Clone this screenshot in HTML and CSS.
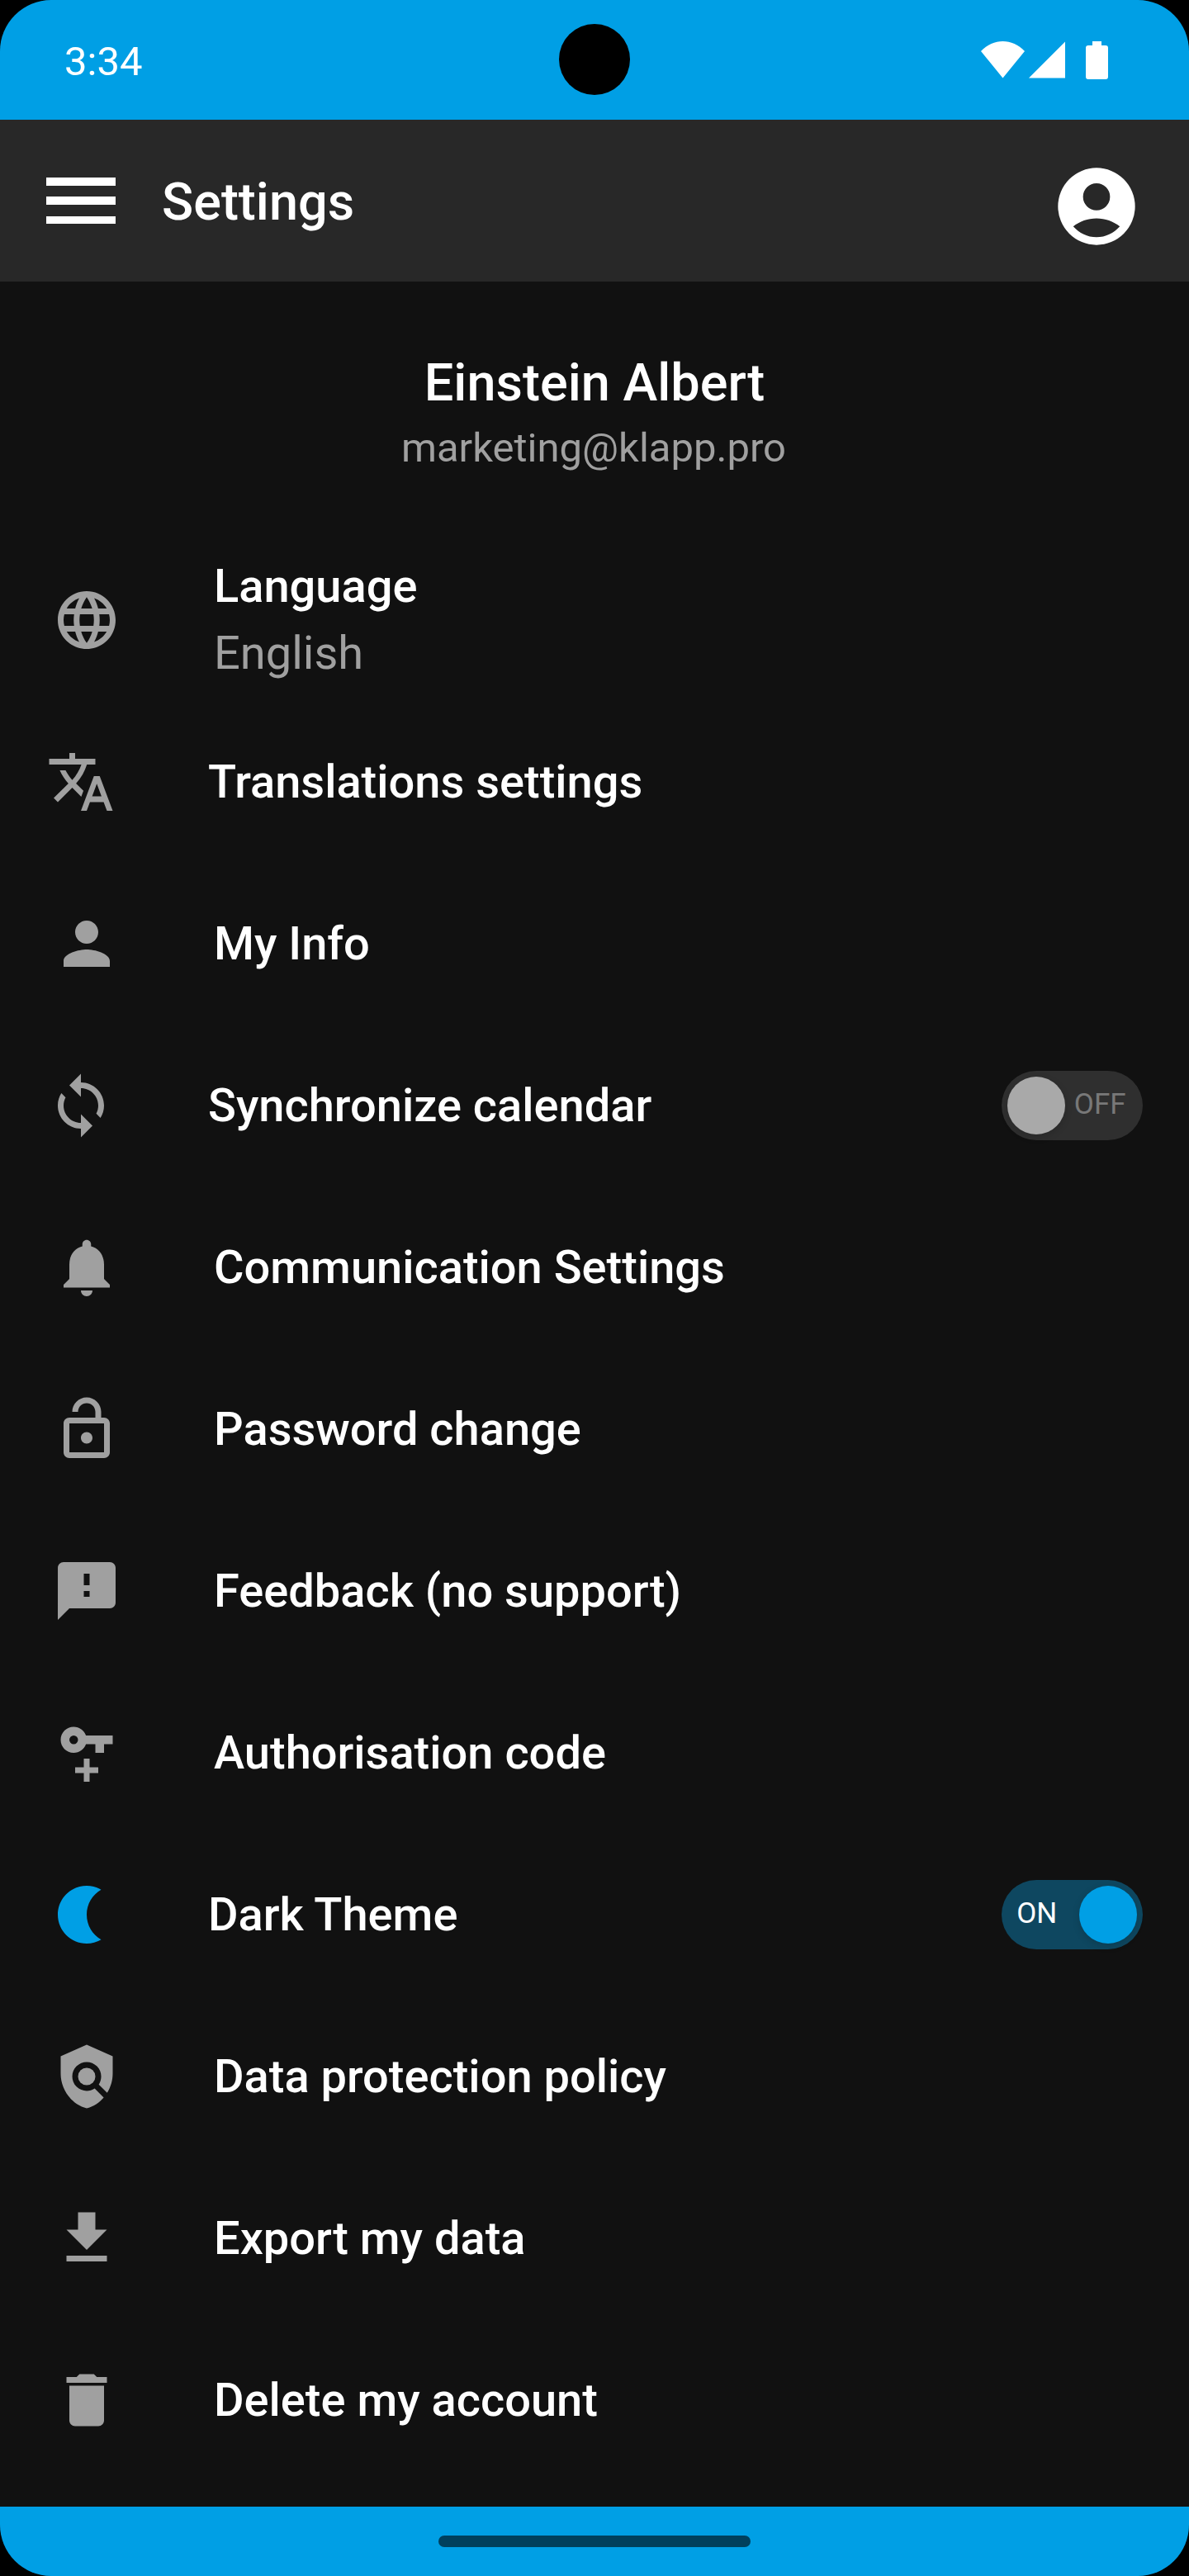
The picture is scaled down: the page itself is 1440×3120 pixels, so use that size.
FILE: index.html
```html
<!DOCTYPE html>
<html lang="en">
<head>
<meta charset="utf-8">
<title>Settings</title>
<link rel="stylesheet" href="styles.css">
</head>
<body>
<div class="screen">
  <div class="status-bar">
    <span class="clock">3:34</span>
    <span class="camera"></span>
    <svg class="status-icons" viewBox="0 0 154 46"><path d="M0 12C15-4 38-4 53 12L26.500 44.500z"/><path d="M102 0.500v44H58z"/><path d="M135 0h11v5h5a3 3 0 0 1 3 3v35a3 3 0 0 1-3 3h-21a3 3 0 0 1-3-3V8a3 3 0 0 1 3-3h5z"/></svg>
  </div>
  <header class="app-bar">
    <span class="menu"><i></i><i></i><i></i></span>
    <h1 class="title">Settings</h1>
    <svg class="avatar" viewBox="0 0 24 24"><path fill-rule="evenodd" d="M12 2a10 10 0 1 0 0 20 10 10 0 0 0 0-20zM12 6a3.500 3.500 0 1 1 0 7 3.500 3.500 0 0 1 0-7zM12 20c-2.350 0-4.480-1.090-6.050-2.800C7.630 15.880 9.720 15.100 12 15.100s4.370.780 6.050 2.100C16.480 18.910 14.350 20 12 20z"/></svg>
  </header>
  <main>
    <section class="profile">
      <div class="name">Einstein Albert</div>
      <div class="email">marketing@klapp.pro</div>
    </section>
    <div class="row">
      <svg class="icon" viewBox="0 0 24 24"><path d="M11.990 2C6.470 2 2 6.480 2 12s4.470 10 9.990 10C17.520 22 22 17.520 22 12S17.520 2 11.990 2zm6.930 6h-2.950c-.320-1.250-.780-2.450-1.380-3.560 1.840.630 3.370 1.910 4.330 3.560zM12 4.040c.830 1.200 1.480 2.530 1.910 3.960h-3.820c.430-1.430 1.080-2.760 1.910-3.960zM4.260 14C4.100 13.360 4 12.690 4 12s.100-1.360.260-2h3.380c-.080.660-.140 1.320-.140 2 0 .680.060 1.340.140 2H4.260zm.820 2h2.950c.320 1.250.780 2.450 1.380 3.560-1.840-.630-3.370-1.900-4.330-3.560zm2.950-8H5.080c.960-1.660 2.490-2.930 4.330-3.560C8.810 5.550 8.350 6.750 8.030 8zM12 19.960c-.830-1.200-1.480-2.530-1.910-3.960h3.820c-.430 1.430-1.080 2.760-1.910 3.960zM14.340 14H9.660c-.090-.660-.160-1.320-.160-2 0-.680.070-1.350.160-2h4.680c.090.650.160 1.320.160 2 0 .680-.070 1.340-.160 2zm.250 5.560c.600-1.110 1.060-2.310 1.380-3.560h2.950c-.960 1.650-2.490 2.930-4.330 3.560zM16.360 14c.080-.660.140-1.320.140-2 0-.680-.060-1.340-.140-2h3.380c.160.640.260 1.310.260 2s-.100 1.360-.260 2h-3.380z"/></svg>
      <div class="label">Language<div class="sub">English</div></div>
    </div>
    <div class="row wide">
      <svg class="icon" viewBox="0 0 24 24"><path d="M12.870 15.070l-2.540-2.510.030-.030c1.740-1.940 2.980-4.170 3.710-6.530H17V4h-7V2H8v2H1v1.990h11.170C11.500 7.920 10.440 9.750 9 11.350 8.070 10.320 7.300 9.190 6.690 8h-2c.730 1.630 1.730 3.170 2.980 4.560l-5.090 5.020L4 19l5-5 3.110 3.110.760-2.040zM18.500 10h-2L12 22h2l1.120-3h4.750L21 22h2l-4.500-12zm-2.620 7l1.620-4.330L19.120 17h-3.240z"/></svg>
      <div class="label">Translations settings</div>
    </div>
    <div class="row">
      <svg class="icon" viewBox="0 0 24 24"><path d="M12 12c2.210 0 4-1.790 4-4s-1.790-4-4-4-4 1.790-4 4 1.790 4 4 4zm0 2c-2.670 0-8 1.340-8 4v2h16v-2c0-2.660-5.330-4-8-4z"/></svg>
      <div class="label">My Info</div>
    </div>
    <div class="row wide">
      <svg class="icon" viewBox="0 0 24 24"><path d="M12 4V1L8 5l4 4V6c3.310 0 6 2.690 6 6 0 1.010-.250 1.970-.700 2.800l1.460 1.460C19.540 15.030 20 13.570 20 12c0-4.420-3.580-8-8-8zm0 14c-3.310 0-6-2.690-6-6 0-1.010.250-1.970.700-2.800L5.240 7.740C4.460 8.970 4 10.430 4 12c0 4.420 3.580 8 8 8v3l4-4-4-4v3z"/></svg>
      <div class="label">Synchronize calendar</div>
      <div class="toggle"><span class="thumb"></span><span class="state">OFF</span></div>
    </div>
    <div class="row">
      <svg class="icon" viewBox="0 0 24 24"><path d="M12 22c1.100 0 2-.900 2-2h-4c0 1.100.890 2 2 2zm6-6v-5c0-3.070-1.640-5.640-4.500-6.320V4c0-.830-.670-1.500-1.500-1.500s-1.500.670-1.500 1.500v.680C7.630 5.360 6 7.920 6 11v5l-2 2v1h16v-1l-2-2z"/></svg>
      <div class="label">Communication Settings</div>
    </div>
    <div class="row">
      <svg class="icon" viewBox="0 0 24 24"><path d="M12 17c1.100 0 2-.900 2-2s-.900-2-2-2-2 .900-2 2 .900 2 2 2zm6-9h-1V6c0-2.760-2.240-5-5-5S7 3.240 7 6h2c0-1.660 1.340-3 3-3s3 1.340 3 3v2H6c-1.100 0-2 .900-2 2v10c0 1.100.900 2 2 2h12c1.100 0 2-.900 2-2V10c0-1.100-.900-2-2-2zm0 12H6V10h12v10z"/></svg>
      <div class="label">Password change</div>
    </div>
    <div class="row">
      <svg class="icon" viewBox="0 0 24 24"><path d="M20 2H4c-1.100 0-1.990.900-1.990 2L2 22l4-4h14c1.100 0 2-.900 2-2V4c0-1.100-.900-2-2-2zm-7 12h-2v-2h2v2zm0-4h-2V6h2v4z"/></svg>
      <div class="label">Feedback (no support)</div>
    </div>
    <div class="row">
      <svg class="icon" viewBox="0 0 24 24"><path d="M7.500 3C5 3 3 5 3 7.500S5 12 7.500 12c1.960 0 3.630-1.250 4.240-3H15v3h3V9h3V6h-9.260C11.130 4.250 9.460 3 7.500 3zm0 3a1.500 1.500 0 1 1 0 3 1.500 1.500 0 0 1 0-3zM11 14h2v3h3v2h-3v3h-2v-3H8v-2h3z"/></svg>
      <div class="label">Authorisation code</div>
    </div>
    <div class="row wide">
      <svg class="icon active" viewBox="0 0 24 24"><path d="M14 2c1.820 0 3.530.500 5 1.350-2.990 1.730-5 4.950-5 8.650s2.010 6.920 5 8.650A9.970 9.970 0 0 1 14 22C8.480 22 4 17.520 4 12S8.480 2 14 2z"/></svg>
      <div class="label">Dark Theme</div>
      <div class="toggle on"><span class="state">ON</span><span class="thumb"></span></div>
    </div>
    <div class="row">
      <svg class="icon" viewBox="0 0 24 24"><path d="M21 5l-9-4-9 4v6c0 5.550 3.840 10.740 9 12 2.300-.560 4.330-1.900 5.880-3.710l-3.120-3.120c-1.940 1.290-4.580 1.070-6.290-.640-1.950-1.950-1.950-5.120 0-7.070 1.950-1.950 5.120-1.950 7.070 0 1.710 1.710 1.920 4.350.640 6.290l2.900 2.900C20.290 15.690 21 13.380 21 11V5z"/><circle cx="12" cy="12" r="3"/></svg>
      <div class="label">Data protection policy</div>
    </div>
    <div class="row">
      <svg class="icon" viewBox="0 0 24 24"><path d="M19 9h-4V3H9v6H5l7 7 7-7zM5 18v2h14v-2H5z"/></svg>
      <div class="label">Export my data</div>
    </div>
    <div class="row">
      <svg class="icon" viewBox="0 0 24 24"><path d="M6 19c0 1.100.900 2 2 2h8c1.100 0 2-.900 2-2V7H6v12zM19 4h-3.500l-1-1h-5l-1 1H5v2h14V4z"/></svg>
      <div class="label">Delete my account</div>
    </div>
  </main>
  <footer class="nav-bar"><span class="handle"></span></footer>
</div>
</body>
</html>
```

FILE: styles.css
```css
* { box-sizing: border-box; }
body { margin: 0; background: #000; }
.screen {
  display: flex;
  flex-direction: column;
  width: 1440px;
  height: 3120px;
  overflow: hidden;
  border-radius: 62px;
  background: #111;
  color: #fff;
  font-family: Roboto, sans-serif;
}
svg { display: block; flex: none; fill: currentColor; }

.status-bar {
  display: grid;
  grid-template-columns: 1fr 86px 1fr;
  flex: none;
  height: 145px;
  padding: 0 98px 0 78px;
  background: #009fe5;
  position: relative;
}
.clock { grid-column: 1; padding-top: 45px; font-size: 49px; line-height: 60px; }
.camera {
  position: absolute;
  left: 677px;
  top: 29px;
  width: 86px;
  height: 86px;
  border-radius: 50%;
  background: #000;
}
.status-icons { grid-column: 3; justify-self: end; width: 154px; height: 46px; margin-top: 50px; }

.app-bar {
  display: flex;
  align-items: center;
  flex: none;
  height: 196px;
  padding: 0 56px;
  background: #282828;
}
.menu { display: flex; flex-direction: column; justify-content: space-between; width: 84px; height: 56px; }
.menu i { height: 9.500px; background: #fff; }
.title { flex: 1; margin: 3px 0 0 56px; font-size: 63px; font-weight: 500; line-height: 80px; }
.avatar { width: 112px; height: 112px; margin-top: 14px; }

main { flex: 1; }
.profile { height: 312px; padding-top: 83px; text-align: center; }
.name { font-size: 63px; font-weight: 500; line-height: 79px; }
.email { padding-right: 2px; color: #a0a0a0; font-size: 49px; line-height: 79px; }

.row { display: flex; align-items: center; height: 196px; padding: 0 56px 0 63px; }
.row.wide { padding-left: 56px; }
.icon { width: 84px; height: 84px; color: #a0a0a0; }
.icon.active { color: #009fe5; }
.label { flex: 1; margin-left: 112px; font-size: 56px; font-weight: 500; line-height: 81px; }
.sub { color: #a0a0a0; font-weight: 400; }

.toggle {
  display: flex;
  align-items: center;
  width: 171.500px;
  height: 84px;
  padding: 7px;
  border-radius: 42px;
  background: #2f2f2f;
  color: #787878;
}
.toggle.on { background: #0e4760; color: #fff; }
.thumb { width: 70px; height: 70px; border-radius: 50%; background: #a9a9a9; box-shadow: 0 3px 10px rgba(0, 0, 0, .15); }
.on .thumb { background: #009fe5; }
.state { flex: 1; padding: 0 2px 2px 0; text-align: center; font-size: 35px; line-height: 42px; }
.on .state { padding-right: 15px; }

.nav-bar {
  display: flex;
  align-items: center;
  justify-content: center;
  flex: none;
  height: 84px;
  background: #009fe5;
}
.handle { width: 378px; height: 14px; border-radius: 7px; background: #00405d; }
```
